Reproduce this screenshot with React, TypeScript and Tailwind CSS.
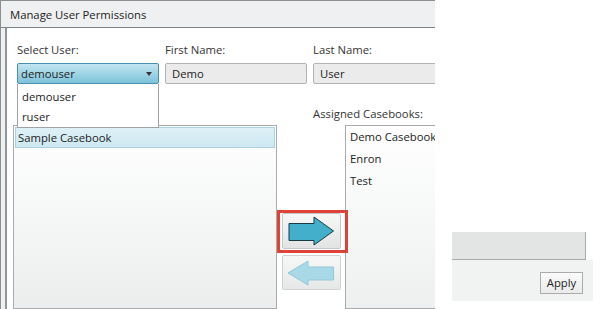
import React from "react";

const font = { fontFamily: '"Open Sans", "Noto Sans", sans-serif' };

function RightArrow({ faded }: { faded?: boolean }) {
  const fill = faded ? "#a9d9e7" : "#43afcb";
  const stroke = faded ? "#8fc6d6" : "#173a44";
  return (
    <svg width="47" height="30" viewBox="0 0 47 30">
      <path
        d="M1 7.5 H26 V1 L45.5 15 L26 29 V24.5 H1 Z"
        fill={fill}
        stroke={stroke}
        strokeWidth="1"
        strokeLinejoin="miter"
      />
    </svg>
  );
}

function LeftArrow({ faded }: { faded?: boolean }) {
  const fill = faded ? "#a9d9e7" : "#43afcb";
  const stroke = faded ? "#93c8d8" : "#173a44";
  return (
    <svg width="48" height="26" viewBox="0 0 48 26">
      <path
        d="M1 13 L21 1 V7 H46.5 V20 H21 V25 Z"
        fill={fill}
        stroke={stroke}
        strokeWidth="1"
      />
    </svg>
  );
}

function Field({ label, children }: { label: string; children: React.ReactNode }) {
  return (
    <div className="flex flex-col">
      <div className="h-[16px] pt-px leading-[16px] text-[11.3px] text-[#333]">{label}</div>
      <div className="mt-[6px]">{children}</div>
    </div>
  );
}

function TextBox({ value }: { value: string }) {
  return (
    <div className="h-[21px] w-[142px] rounded-[2px] border border-[#b3b3b3] bg-[#ebebeb] pl-[6px] text-[11.3px] leading-[20px] text-[#222]">
      {value}
    </div>
  );
}

export default function App() {
  return (
    <div className="flex h-[309px] w-[614px] overflow-hidden bg-white text-[#222]" style={font}>
      {/* dialog */}
      <div className="flex h-[309px] w-[435px] shrink-0 flex-col overflow-hidden border-l border-t border-[#8a8f92] bg-[#eef0f1]">
        <div className="flex h-[27px] shrink-0 items-center border-b border-[#7d868b] pl-[9px] pt-[2px] text-[11.3px] text-[#222]">
          Manage User Permissions
        </div>
        <div className="flex flex-1 pl-[4px]">
          <div className="relative flex flex-1 flex-col border-l-2 border-[#8f9497] bg-white pl-[10px] pt-[13px]">
            <div className="grid w-[600px] grid-cols-[142px_142px_142px] gap-x-[6px]">
              <Field label="Select User:">
                <div className="relative flex h-[21px] w-[142px] items-center rounded-[2px] border border-[#4a90b2] bg-gradient-to-b from-[#c2e6f1] to-[#7bc3d8] pl-[3px] pt-px text-[11.3px]">
                  <span>demouser</span>
                  <span className="absolute right-[6px] top-[8px] h-0 w-0 border-x-[3.5px] border-t-[4px] border-x-transparent border-t-[#333]" />
                </div>
              </Field>
              <Field label="First Name:">
                <TextBox value="Demo" />
              </Field>
              <Field label="Last Name:">
                <TextBox value="User" />
              </Field>
            </div>

            <div className="ml-[296px] mt-[21px] h-[16px] pt-px text-[11.3px] leading-[16px] text-[#333]">
              Assigned Casebooks:
            </div>

            <div className="-ml-[4px] mt-[4px] flex flex-1">
              {/* available list */}
              <div className="w-[264px] shrink-0 border border-[#a9abac] bg-gradient-to-b from-white to-[#eceeee] p-px">
                <div className="h-[21px] border border-[#a9d3e3] bg-gradient-to-b from-[#dff1f7] to-[#cde8f2] pl-[2px] text-[11.3px] leading-[19px]">
                  Sample Casebook
                </div>
              </div>

              {/* move buttons */}
              <div className="flex w-[68px] shrink-0 flex-col items-center gap-[6px] pl-[4px] pr-[4px] pt-[88px]">
                <div className="relative">
                  <div className="flex h-[36px] w-[59px] items-center justify-center rounded-[2px] border border-[#c4c6c7] bg-gradient-to-b from-[#f7f7f7] to-[#e2e4e4]">
                    <RightArrow />
                  </div>
                  <div className="pointer-events-none absolute -bottom-[4px] -left-[5px] -right-[7px] -top-[3px] border-[3px] border-[#df4338]" />
                </div>
                <div className="flex h-[35px] w-[59px] items-center justify-center rounded-[2px] border border-[#cfd1d2] bg-gradient-to-b from-[#f7f7f7] to-[#e6e8e8]">
                  <LeftArrow faded />
                </div>
              </div>

              {/* assigned list */}
              <div className="w-[120px] shrink-0 border border-[#a9abac] bg-gradient-to-b from-white to-[#eef0f0] pl-[4px]">
                {["Demo Casebook", "Enron", "Test"].map((c) => (
                  <div key={c} className="h-[22px] whitespace-nowrap text-[11.3px] leading-[22px]">
                    {c}
                  </div>
                ))}
              </div>
            </div>

            {/* open dropdown */}
            <div className="absolute left-[10px] top-[56px] w-[142px] border border-t-0 border-[#a0a3a5] bg-white pt-[3px] text-[11.3px]">
              <div className="h-[20px] pl-[4px] leading-[20px]">demouser</div>
              <div className="h-[20px] pl-[4px] leading-[20px]">ruser</div>
            </div>
          </div>
        </div>
      </div>

      {/* footer fragment */}
      <div className="ml-[17px] flex flex-col pt-[232px]">
        <div className="h-[28px] w-[134px] border-b border-r border-[#a8aaab] bg-[#e3e5e5]" />
        <div className="flex h-[41px] w-[141px] items-start justify-end bg-[#f1f2f2] pr-[10px] pt-[12px]">
          <div className="flex h-[22px] w-[43px] items-center justify-center border border-[#a9abac] bg-gradient-to-b from-[#fbfbfb] to-[#eaeaea] text-[11.3px] text-[#222]">
            Apply
          </div>
        </div>
      </div>
    </div>
  );
}
